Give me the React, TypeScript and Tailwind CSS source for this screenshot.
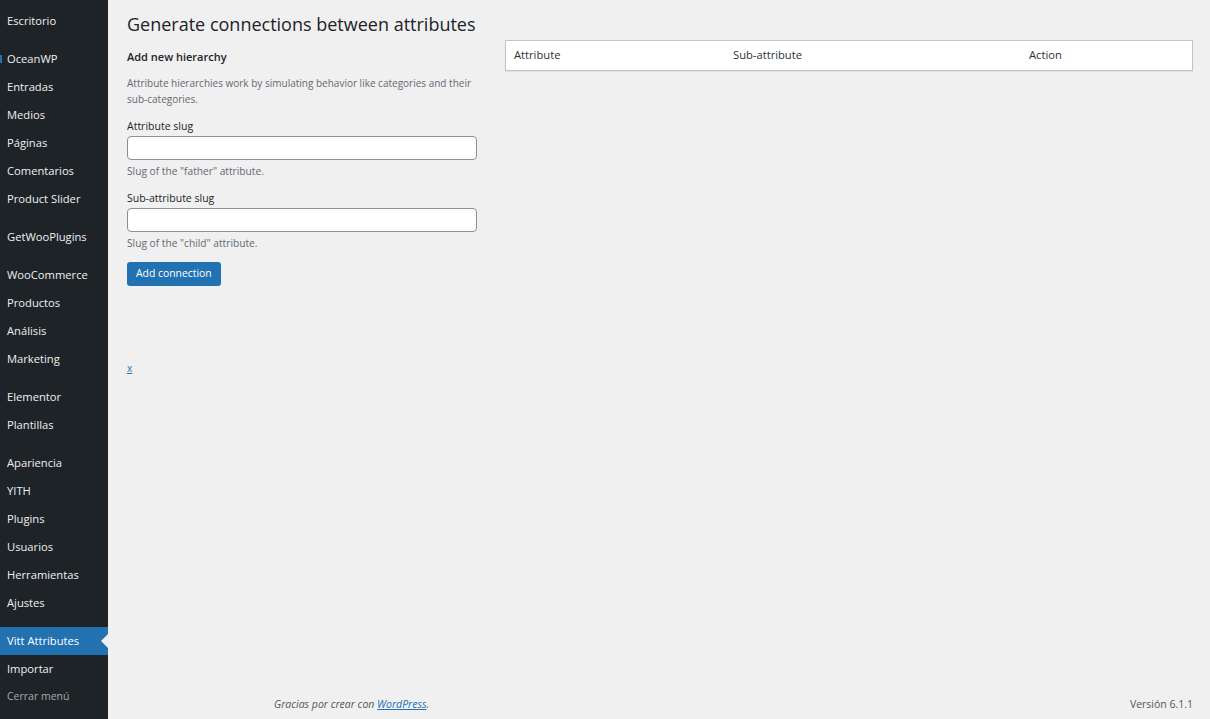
import React from "react";

const menu: { label: string; gap?: boolean; active?: boolean; dot?: boolean; muted?: boolean }[] = [
  { label: "Escritorio", gap: true },
  { label: "OceanWP", dot: true },
  { label: "Entradas" },
  { label: "Medios" },
  { label: "Páginas" },
  { label: "Comentarios" },
  { label: "Product Slider", gap: true },
  { label: "GetWooPlugins", gap: true },
  { label: "WooCommerce" },
  { label: "Productos" },
  { label: "Análisis" },
  { label: "Marketing", gap: true },
  { label: "Elementor" },
  { label: "Plantillas", gap: true },
  { label: "Apariencia" },
  { label: "YITH" },
  { label: "Plugins" },
  { label: "Usuarios" },
  { label: "Herramientas" },
  { label: "Ajustes", gap: true },
  { label: "Vitt Attributes", active: true },
  { label: "Importar" },
  { label: "Cerrar menú", muted: true },
];

function Sidebar() {
  return (
    <aside className="w-[108px] shrink-0 bg-[#1d2327] pt-[7px]">
      <ul>
        {menu.map((m) => (
          <li
            key={m.label}
            className={`relative flex h-[28px] items-center pl-[7px] ${m.gap ? "mb-[10px]" : ""} ${
              m.active ? "bg-[#2271b1] text-white" : m.muted ? "text-[#a7aaad]" : "text-[#f0f0f1]"
            } ${m.muted ? "text-[10.5px]" : "text-[11.2px]"}`}
          >
            {m.dot && <span className="absolute left-0 top-[10px] h-[8px] w-[2px] bg-[#2271b1]" />}
            <span className="whitespace-nowrap">{m.label}</span>
            {m.active && (
              <span className="absolute right-0 top-1/2 h-0 w-0 -translate-y-1/2 border-y-[7px] border-r-[7px] border-y-transparent border-r-[#f0f0f1]" />
            )}
          </li>
        ))}
      </ul>
    </aside>
  );
}

function Field({ label, help }: { label: string; help: string }) {
  return (
    <div className="mb-[11px]">
      <label className="block text-[10.5px] leading-[16px] text-[#1d2327]">{label}</label>
      <input
        type="text"
        className="mt-[2px] block h-[24px] w-[350px] rounded-[4px] border border-[#8c8f94] bg-white"
      />
      <p className="mt-[3px] text-[10.2px] leading-[16px] text-[#646970]">{help}</p>
    </div>
  );
}

export default function App() {
  return (
    <div
      className="flex min-h-screen bg-[#f0f0f1]"
      style={{ fontFamily: '"Open Sans", "Noto Sans", sans-serif' }}
    >
      <Sidebar />
      <main className="flex flex-1 flex-col">
        <div className="flex-1 pl-[19px] pr-[17px]">
          <h1 className="mt-[9px] text-[18px] leading-[30px] text-[#1d2327]">
            Generate connections between attributes
          </h1>
          <div className="flex gap-[13px]">
            <div className="w-[365px] shrink-0">
              <h2 className="mt-[9px] text-[11px] font-semibold leading-[18px] text-[#1d2327]">
                Add new hierarchy
              </h2>
              <p className="mt-[9px] text-[10px] leading-[16px] text-[#646970]">
                Attribute hierarchies work by simulating behavior like categories and their sub-categories.
              </p>
              <div className="mt-[11px]">
                <Field label="Attribute slug" help='Slug of the "father" attribute.' />
                <Field label="Sub-attribute slug" help='Slug of the "child" attribute.' />
              </div>
              <button className="mt-[2px] block h-[24px] rounded-[3px] bg-[#2271b1] px-[9px] text-[10.4px] text-white">
                Add connection
              </button>
              <div className="mt-[75px] text-[10px] leading-[14px]">
                <a className="text-[#2271b1] underline">x</a>
              </div>
            </div>
            <div className="flex-1 pt-[1px]">
              <div className="grid h-[31px] grid-cols-[219px_296px_1fr] items-center border border-[#c3c4c7] bg-white pl-[8px] text-[11.2px] text-[#2c3338] shadow-[0_1px_1px_rgba(0,0,0,0.06)]">
                <span>Attribute</span>
                <span>Sub-attribute</span>
                <span>Action</span>
              </div>
            </div>
          </div>
        </div>
        <footer className="flex items-center justify-between pb-[6px] pl-[166px] pr-[17px] text-[10.5px] text-[#50575e]">
          <span className="italic">
            Gracias por crear con <a className="text-[#2271b1] underline">WordPress</a>.
          </span>
          <span>Versión 6.1.1</span>
        </footer>
      </main>
    </div>
  );
}
